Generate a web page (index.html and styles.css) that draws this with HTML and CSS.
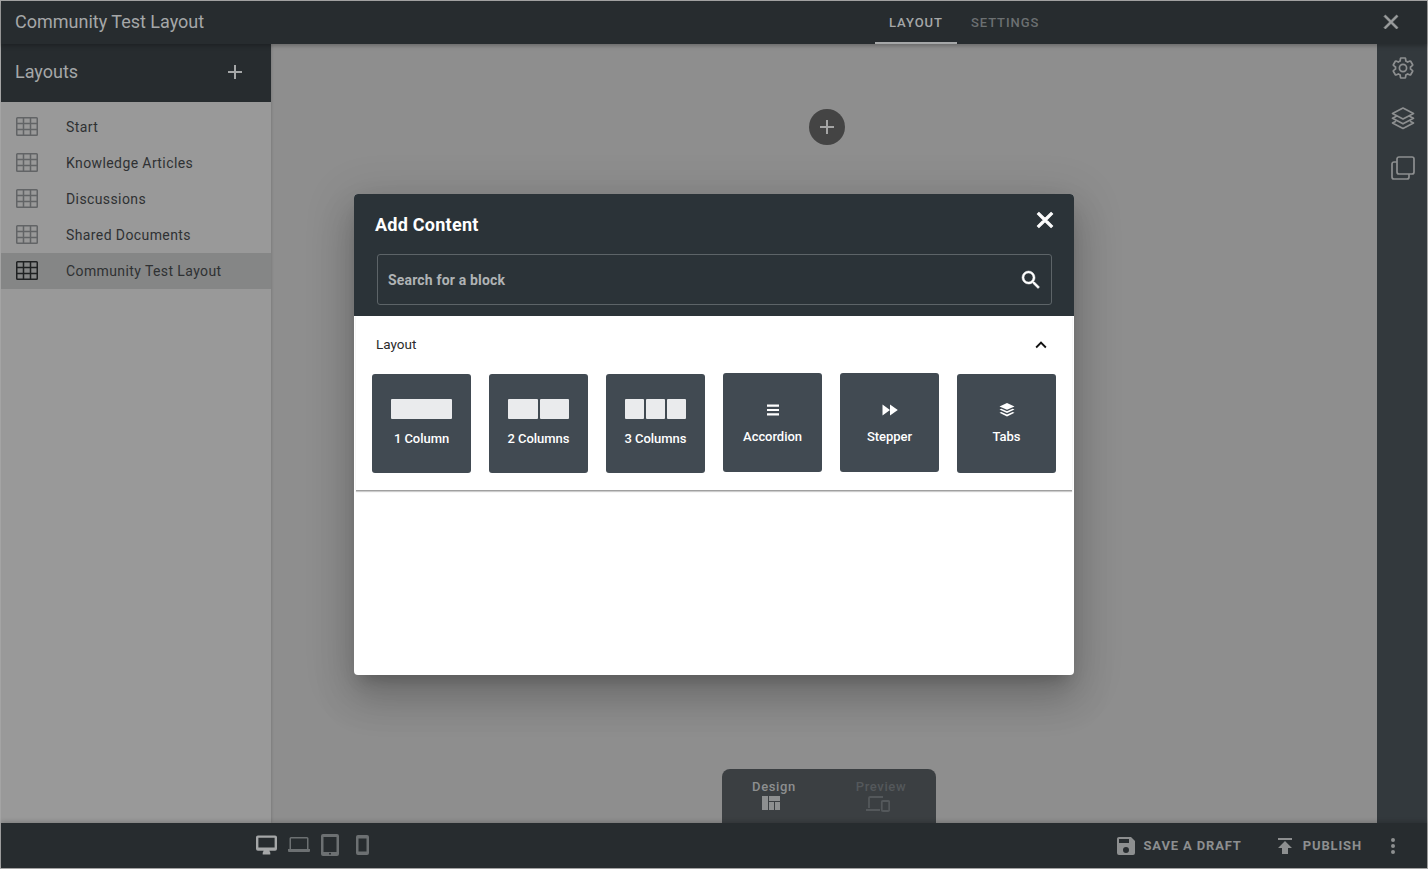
FILE: index.html
```html
<!DOCTYPE html>
<html>
<head>
  <title>Community Test Layout</title>
  <link rel="stylesheet" href="styles.css">
</head>
<body>
  <svg class="defs" width="0" height="0">
    <symbol id="grid-icon" viewBox="0 0 22 19">
      <path d="M1.5 .75h19a.75.75 0 0 1 .75.75v16a.75.75 0 0 1-.75.75h-19a.75.75 0 0 1-.75-.75v-16a.75.75 0 0 1 .75-.75zM1 6.5h20M1 12.5h20M7.5 1v17M14.5 1v17" fill="none" stroke="currentColor" stroke-width="1.5"/>
    </symbol>
  </svg>

  <div class="app">
    <header class="topbar">
      <div class="app-title">Community Test Layout</div>
      <nav class="tabs">
        <a class="tab tab-active">LAYOUT</a>
        <a class="tab">SETTINGS</a>
      </nav>
      <svg class="top-close" viewBox="0 0 24 24"><path fill="currentColor" stroke="currentColor" stroke-width="0.7" d="M19 6.41L17.59 5 12 10.59 6.41 5 5 6.41 10.59 12 5 17.59 6.41 19 12 13.41 17.59 19 19 17.59 13.41 12z"/></svg>
    </header>

    <div class="middle">
      <aside class="sidebar">
        <div class="sidebar-head">
          <span>Layouts</span>
          <svg class="sidebar-add" viewBox="0 0 24 24"><path fill="currentColor" d="M19 13h-6v6h-2v-6H5v-2h6V5h2v6h6v2z"/></svg>
        </div>
        <ul class="layout-list">
          <li><svg class="grid-icon"><use href="#grid-icon"/></svg>Start</li>
          <li><svg class="grid-icon"><use href="#grid-icon"/></svg>Knowledge Articles</li>
          <li><svg class="grid-icon"><use href="#grid-icon"/></svg>Discussions</li>
          <li><svg class="grid-icon"><use href="#grid-icon"/></svg>Shared Documents</li>
          <li class="active"><svg class="grid-icon"><use href="#grid-icon"/></svg>Community Test Layout</li>
        </ul>
      </aside>

      <main class="canvas">
        <button class="add-row">
          <svg viewBox="0 0 24 24"><path fill="currentColor" d="M19 13h-6v6h-2v-6H5v-2h6V5h2v6h6v2z"/></svg>
        </button>
        <div class="mode-switch">
          <div class="mode">
            <span>Design</span>
            <svg viewBox="0 0 18 14"><path fill="currentColor" d="M0 0h6v14H0zM7 0h11v5H7zM7 6h5v8H7zM13 6h5v8h-5z"/></svg>
          </div>
          <div class="mode mode-off">
            <span>Preview</span>
            <svg viewBox="0 0 24 16"><path fill="none" stroke="currentColor" stroke-width="1.8" d="M3 12V2a1 1 0 0 1 1-1h13M0 14h14M16.800 5h5.400a1 1 0 0 1 1 1v8a1 1 0 0 1-1 1h-5.400a1 1 0 0 1-1-1V6a1 1 0 0 1 1-1z"/></svg>
          </div>
        </div>
      </main>

      <aside class="rail">
        <svg viewBox="0 0 24 24"><path fill="none" stroke="currentColor" stroke-width="1.7" d="M19.43 12.98c.04-.32.07-.64.07-.98 0-.34-.03-.66-.07-.98l2.11-1.65c.19-.15.24-.42.12-.64l-2-3.46c-.09-.16-.26-.25-.44-.25-.06 0-.12.01-.17.03l-2.49 1c-.52-.4-1.08-.73-1.69-.98l-.38-2.65C14.46 2.18 14.25 2 14 2h-4c-.25 0-.46.18-.49.42l-.38 2.65c-.61.25-1.17.59-1.69.98l-2.49-1c-.06-.02-.12-.03-.18-.03-.17 0-.34.09-.43.25l-2 3.46c-.13.22-.07.49.12.64l2.11 1.65c-.04.32-.07.65-.07.98 0 .33.03.66.07.98l-2.11 1.65c-.19.15-.24.42-.12.64l2 3.46c.09.16.26.25.44.25.06 0 .12-.01.17-.03l2.49-1c.52.4 1.08.73 1.69.98l.38 2.65c.03.24.24.42.49.42h4c.25 0 .46-.18.49-.42l.38-2.65c.61-.25 1.17-.59 1.69-.98l2.49 1c.06.02.12.03.18.03.17 0 .34-.09.43-.25l2-3.46c.12-.22.07-.49-.12-.64l-2.11-1.65z"/><circle cx="12" cy="12" r="3.6" fill="none" stroke="currentColor" stroke-width="1.7"/></svg>
        <svg viewBox="0 0 24 24"><path fill="none" stroke="currentColor" stroke-width="1.7" stroke-linejoin="round" d="M12 2L22.500 7.500 12 13 1.500 7.500zM5 10.500L1.500 12.300 12 17.800 22.500 12.300 19 10.500M5 15.300L1.500 17 12 22.500 22.500 17 19 15.300"/></svg>
        <svg viewBox="0 0 24 24"><path fill="none" stroke="currentColor" stroke-width="1.7" d="M8 1h13a2 2 0 0 1 2 2v13a2 2 0 0 1-2 2H8a2 2 0 0 1-2-2V3a2 2 0 0 1 2-2zM6 6H3a2 2 0 0 0-2 2v13a2 2 0 0 0 2 2h13a2 2 0 0 0 2-2v-3"/></svg>
      </aside>
    </div>

    <footer class="bottombar">
      <div class="devices">
        <svg class="device device-on" viewBox="0 0 22 20" width="21" height="20"><path fill="currentColor" d="M2 0h18a2 2 0 0 1 2 2v12a2 2 0 0 1-2 2h-6l1 2v2H7v-2l1-2H2a2 2 0 0 1-2-2V2a2 2 0 0 1 2-2zm.500 2.500V12.500h17V2.500z"/></svg>
        <svg class="device" viewBox="0 0 22 16" width="22" height="16"><path fill="currentColor" d="M3 0h16a1.500 1.500 0 0 1 1.500 1.500V12H22v2a1 1 0 0 1-1 1H1a1 1 0 0 1-1-1v-2h1.500V1.500A1.500 1.500 0 0 1 3 0zm0 1.500V12h16V1.500z"/></svg>
        <svg class="device" viewBox="0 0 18 22" width="18" height="22"><path fill="currentColor" d="M2 0h14a2 2 0 0 1 2 2v18a2 2 0 0 1-2 2H2a2 2 0 0 1-2-2V2a2 2 0 0 1 2-2zm.500 3v15h13V3zM9 18.800a1 1 0 1 0 0 2 1 1 0 0 0 0-2z"/></svg>
        <svg class="device device-phone" viewBox="0 0 13 20" width="13" height="20"><path fill="currentColor" d="M2 0h9a2 2 0 0 1 2 2v16a2 2 0 0 1-2 2H2a2 2 0 0 1-2-2V2a2 2 0 0 1 2-2zm.500 3.500v13h8v-13z"/></svg>
      </div>
      <div class="actions">
        <a class="action">
          <svg viewBox="0 0 24 24"><path fill="currentColor" d="M15,9H5V5H15M12,19A3,3 0 0,1 9,16A3,3 0 0,1 12,13A3,3 0 0,1 15,16A3,3 0 0,1 12,19M17,3H5C3.89,3 3,3.9 3,5V19A2,2 0 0,0 5,21H19A2,2 0 0,0 21,19V7L17,3Z"/></svg>
          SAVE A DRAFT
        </a>
        <a class="action">
          <svg viewBox="0 0 24 24"><path fill="currentColor" d="M5,4V6H19V4H5M5,14H9V20H15V14H19L12,7L5,14Z"/></svg>
          PUBLISH
        </a>
        <svg class="more" viewBox="0 0 24 24"><path fill="currentColor" d="M12,16A2,2 0 0,1 14,18A2,2 0 0,1 12,20A2,2 0 0,1 10,18A2,2 0 0,1 12,16M12,10A2,2 0 0,1 14,12A2,2 0 0,1 12,14A2,2 0 0,1 10,12A2,2 0 0,1 12,10M12,4A2,2 0 0,1 14,6A2,2 0 0,1 12,8A2,2 0 0,1 10,6A2,2 0 0,1 12,4Z"/></svg>
      </div>
    </footer>
  </div>

  <!-- Add content dialog -->
  <div class="dialog">
    <div class="dialog-head">
      <div class="dialog-title-row">
        <h2>Add Content</h2>
        <svg class="dialog-close" viewBox="0 0 24 24"><path fill="currentColor" stroke="currentColor" stroke-width="1" d="M19 6.41L17.59 5 12 10.59 6.41 5 5 6.41 10.59 12 5 17.59 6.41 19 12 13.41 17.59 19 19 17.59 13.41 12z"/></svg>
      </div>
      <div class="search">
        <span>Search for a block</span>
        <svg viewBox="0 0 24 24"><path fill="currentColor" stroke="currentColor" stroke-width="0.5" d="M9.5,3A6.5,6.5 0 0,1 16,9.5C16,11.11 15.41,12.59 14.44,13.73L14.71,14H15.5L20.5,19L19,20.5L14,15.5V14.71L13.73,14.44C12.59,15.41 11.11,16 9.5,16A6.5,6.5 0 0,1 3,9.5A6.5,6.5 0 0,1 9.5,3M9.5,5C7,5 5,7 5,9.5C5,12 7,14 9.5,14C12,14 14,12 14,9.5C14,7 12,5 9.5,5Z"/></svg>
      </div>
    </div>
    <section class="block-section">
      <div class="section-head">
        <span>Layout</span>
        <svg viewBox="0 0 24 24"><path fill="currentColor" d="M7.41 15.41L12 10.830l4.590 4.580L18 14l-6-6-6 6z"/></svg>
      </div>
      <div class="blocks">
        <div class="block">
          <div class="cols"><i></i></div>
          <span>1 Column</span>
        </div>
        <div class="block">
          <div class="cols"><i></i><i></i></div>
          <span>2 Columns</span>
        </div>
        <div class="block">
          <div class="cols"><i></i><i></i><i></i></div>
          <span>3 Columns</span>
        </div>
        <div class="block block-icon block-up">
          <svg viewBox="0 0 14 14"><path fill="currentColor" d="M1 1.500h12v2.200H1zM1 5.900h12v2.200H1zM1 10.300h12v2.200H1z"/></svg>
          <span>Accordion</span>
        </div>
        <div class="block block-icon block-up">
          <svg viewBox="0 0 16 14"><path fill="currentColor" d="M.500 1.500l7.500 5.500-7.500 5.500zM8 1.500l7.800 5.500L8 12.500z"/></svg>
          <span>Stepper</span>
        </div>
        <div class="block block-icon">
          <svg viewBox="0 0 16 14"><path fill="currentColor" d="M8 0l7.500 3.400L8 6.800 .5 3.400zM2.300 5.700L8 8.300l5.700-2.600 1.800.9L8 10 .5 6.600zM2.300 9L8 11.500 13.700 9l1.800.8L8 13.500 .5 9.800z"/></svg>
          <span>Tabs</span>
        </div>
      </div>
    </section>
  </div>
</body>
</html>
```

FILE: styles.css
```css
* {
  box-sizing: border-box;
}

body {
  margin: 0;
  height: 869px;
  overflow: hidden;
  font-family: Roboto, "Liberation Sans", sans-serif;
  background-color: #8e8e8e;
}

.defs {
  position: absolute;
}

.app {
  display: flex;
  flex-direction: column;
  height: 869px;
  border: 1px solid #a6a6a6;
}

/* Top bar */
.topbar {
  display: flex;
  align-items: center;
  flex: 0 0 43px;
  padding-right: 24px;
  background-color: #272c2f;
  box-shadow: 0 2px 4px rgba(0, 0, 0, 0.25);
  position: relative;
  z-index: 2;
}

.app-title {
  flex: 0 0 874px;
  padding-left: 14px;
  padding-bottom: 2px;
  font-size: 18px;
  color: #a5a7a8;
}

.tabs {
  display: flex;
  height: 100%;
}

.tab {
  display: flex;
  align-items: center;
  padding: 0 14px;
  font-size: 13px;
  font-weight: 500;
  letter-spacing: 0.95px;
  color: #6c7072;
}

.tab-active {
  color: #a5a7a8;
  border-bottom: 2px solid #a5a7a8;
  padding-top: 2px;
}

.top-close {
  width: 24px;
  height: 24px;
  margin-left: auto;
  margin-bottom: 2px;
  color: #9b9d9e;
}

/* Middle area */
.middle {
  display: flex;
  flex: 1;
  min-height: 0;
}

.sidebar {
  flex: 0 0 270px;
  background-color: #999999;
  box-shadow: 1px 0 2px rgba(0, 0, 0, 0.12);
  position: relative;
  z-index: 1;
}

.sidebar-head {
  display: flex;
  align-items: center;
  justify-content: space-between;
  height: 58px;
  padding: 0 24px 2px 14px;
  background-color: #272c2f;
  font-size: 18px;
  color: #a5a7a8;
}

.sidebar-head span {
  margin-bottom: 2px;
}

.sidebar-add {
  width: 24px;
  height: 24px;
  color: #a5a7a8;
}

.layout-list {
  list-style: none;
  margin: 7px 0 0;
  padding: 0;
}

.layout-list li {
  display: flex;
  align-items: center;
  height: 36px;
  padding-left: 15px;
  font-size: 14px;
  letter-spacing: 0.4px;
  color: #2f3133;
}

.layout-list li.active {
  background-color: #858686;
}

.grid-icon {
  width: 22px;
  height: 19px;
  margin-right: 28px;
  margin-bottom: 2px;
  color: #626466;
}

.active .grid-icon {
  color: #1f2122;
}

/* Canvas */
.canvas {
  display: flex;
  flex: 1;
  flex-direction: column;
  align-items: center;
  padding-top: 65px;
  background-color: #8e8e8e;
}

.add-row {
  display: flex;
  align-items: center;
  justify-content: center;
  width: 36px;
  height: 36px;
  margin-left: 6px;
  padding: 0;
  border: none;
  border-radius: 50%;
  background-color: #444444;
  color: #a5a5a5;
}

.add-row svg {
  width: 24px;
  height: 24px;
}

.mode-switch {
  display: flex;
  width: 214px;
  height: 54px;
  margin-top: auto;
  margin-left: 10px;
  padding: 10px 0 0 21px;
  gap: 45px;
  border-radius: 8px 8px 0 0;
  background-color: #3b3f42;
}

.mode {
  display: flex;
  flex-direction: column;
  align-items: center;
  width: 62px;
  font-size: 13px;
  font-weight: 500;
  letter-spacing: 0.65px;
  line-height: 15px;
  color: #8d8f90;
}

.mode svg {
  width: 18px;
  height: 14px;
  margin-top: 2px;
  margin-right: 6px;
}

.mode-off {
  color: #54585b;
}

.mode-off svg {
  width: 24px;
  height: 16px;
  margin-right: 6px;
}

.rail {
  display: flex;
  flex: 0 0 50px;
  flex-direction: column;
  align-items: center;
  gap: 26px;
  padding-top: 12px;
  background-color: #33393d;
  color: #8d8f90;
}

.rail svg {
  width: 24px;
  height: 24px;
  margin-left: 1px;
}

/* Bottom bar */
.bottombar {
  display: flex;
  align-items: center;
  justify-content: space-between;
  flex: 0 0 45px;
  padding: 0 22px 0 255px;
  background-color: #272c2f;
  box-shadow: 0 -2px 4px rgba(0, 0, 0, 0.15);
  position: relative;
  z-index: 2;
}

.devices {
  display: flex;
  align-items: center;
  gap: 11px;
  margin-bottom: 2px;
  color: #6c7072;
}

.device-on {
  color: #a5a7a8;
}

.device-phone {
  margin-left: 6px;
}

.actions {
  display: flex;
  align-items: center;
}

.action {
  display: flex;
  align-items: center;
  margin-right: 31px;
  font-size: 13px;
  font-weight: 700;
  letter-spacing: 0.85px;
  color: #8d8f90;
}

.action svg {
  width: 24px;
  height: 24px;
  margin-right: 6px;
}

.more {
  width: 24px;
  height: 24px;
  margin-left: -12px;
  color: #8d8f90;
}

/* Dialog */
.dialog {
  position: absolute;
  left: 354px;
  top: 194px;
  width: 720px;
  height: 481px;
  border-radius: 4px;
  overflow: hidden;
  background-color: #ffffff;
  box-shadow: 0 11px 15px -7px rgba(0, 0, 0, 0.2), 0 24px 38px 3px rgba(0, 0, 0, 0.14), 0 9px 46px 8px rgba(0, 0, 0, 0.12);
}

.dialog-head {
  height: 122px;
  padding: 14px 22px 0 23px;
  background-color: #2b3338;
  color: #ffffff;
}

.dialog-title-row {
  display: flex;
  align-items: flex-start;
  justify-content: space-between;
  height: 46px;
  margin-left: -2px;
}

.dialog-title-row h2 {
  margin: 4px 0 0;
  font-size: 18px;
  font-weight: 700;
  letter-spacing: 0.25px;
  line-height: 26px;
}

.dialog-close {
  width: 26px;
  height: 26px;
  margin: -1px -6px 0 0;
}

.search {
  display: flex;
  align-items: center;
  justify-content: space-between;
  height: 51px;
  padding: 0 8px 0 10px;
  border: 1px solid #5d6468;
  border-radius: 3px;
  font-size: 14px;
  font-weight: 700;
  letter-spacing: 0.17px;
  color: #b0b3b5;
}

.search svg {
  width: 24px;
  height: 24px;
  color: #ffffff;
}

.block-section {
  margin: 0 2px;
  height: 175px;
  border-bottom: 1px solid #a0a0a0;
  box-shadow: 0 1px 1px rgba(0, 0, 0, 0.2);
}

.section-head {
  display: flex;
  align-items: center;
  justify-content: space-between;
  height: 57px;
  padding: 0 20px 2px 20px;
  font-size: 13.5px;
  color: #2b2b2b;
}

.section-head svg {
  width: 22px;
  height: 22px;
  margin-top: 3px;
  color: #111111;
}

.blocks {
  display: grid;
  grid-template-columns: repeat(6, 99px);
  gap: 18px;
  padding-left: 16px;
  padding-top: 1px;
}

.block {
  display: flex;
  flex-direction: column;
  align-items: center;
  height: 99px;
  padding-top: 25px;
  border-radius: 3px;
  background-color: #414a52;
  font-size: 13px;
  font-weight: 500;
  color: #ffffff;
}

.block span {
  margin-top: 12px;
  letter-spacing: -0.05px;
  line-height: 16px;
}

.block-up {
  margin-top: -1px;
}

.cols {
  display: flex;
  gap: 2px;
  width: 61px;
  height: 20px;
}

.cols i {
  flex: 1;
  border-radius: 1px;
  background-color: #eaebed;
}

.block-icon svg {
  width: 16px;
  height: 14px;
  margin-top: 4px;
}

.block-up svg {
  margin-top: 5px;
}
```
